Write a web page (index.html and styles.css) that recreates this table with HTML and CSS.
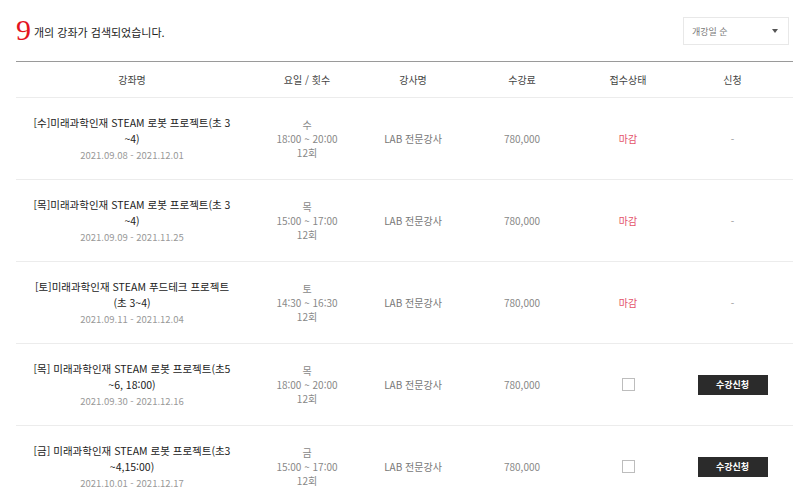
FILE: index.html
```html
<!DOCTYPE html>
<html lang="ko">
<head>
<meta charset="utf-8">
<link rel="stylesheet" href="styles.css">
</head>
<body>
<div class="wrap">
  <div class="top">
    <div class="count"><span class="num">9</span><span class="label">개의 강좌가 검색되었습니다.</span></div>
    <div class="select"><span>개강일 순</span><span class="arrow"></span></div>
  </div>
  <div class="table">
    <div class="row head">
      <div>강좌명</div><div>요일 / 횟수</div><div>강사명</div><div>수강료</div><div>접수상태</div><div>신청</div>
    </div>
    <div class="row">
      <div class="title"><p class="name">[수]미래과학인재 STEAM 로봇 프로젝트(초 3 ~4)</p><p class="date">2021.09.08 - 2021.12.01</p></div>
      <div class="sched">수<br>18:00 ~ 20:00<br>12회</div>
      <div class="teacher">LAB 전문강사</div>
      <div class="fee">780,000</div>
      <div class="closed">마감</div>
      <div class="dash">-</div>
    </div>
    <div class="row">
      <div class="title"><p class="name">[목]미래과학인재 STEAM 로봇 프로젝트(초 3 ~4)</p><p class="date">2021.09.09 - 2021.11.25</p></div>
      <div class="sched">목<br>15:00 ~ 17:00<br>12회</div>
      <div class="teacher">LAB 전문강사</div>
      <div class="fee">780,000</div>
      <div class="closed">마감</div>
      <div class="dash">-</div>
    </div>
    <div class="row">
      <div class="title"><p class="name">[토]미래과학인재 STEAM 푸드테크 프로젝트 (초 3~4)</p><p class="date">2021.09.11 - 2021.12.04</p></div>
      <div class="sched">토<br>14:30 ~ 16:30<br>12회</div>
      <div class="teacher">LAB 전문강사</div>
      <div class="fee">780,000</div>
      <div class="closed">마감</div>
      <div class="dash">-</div>
    </div>
    <div class="row">
      <div class="title"><p class="name">[목] 미래과학인재 STEAM 로봇 프로젝트(초5 ~6, 18:00)</p><p class="date">2021.09.30 - 2021.12.16</p></div>
      <div class="sched">목<br>18:00 ~ 20:00<br>12회</div>
      <div class="teacher">LAB 전문강사</div>
      <div class="fee">780,000</div>
      <div><span class="check"></span></div>
      <div><span class="btn">수강신청</span></div>
    </div>
    <div class="row">
      <div class="title"><p class="name">[금] 미래과학인재 STEAM 로봇 프로젝트(초3 ~4,15:00)</p><p class="date">2021.10.01 - 2021.12.17</p></div>
      <div class="sched">금<br>15:00 ~ 17:00<br>12회</div>
      <div class="teacher">LAB 전문강사</div>
      <div class="fee">780,000</div>
      <div><span class="check"></span></div>
      <div><span class="btn">수강신청</span></div>
    </div>
  </div>
</div>
</body>
</html>
```

FILE: styles.css
```css
* { box-sizing: border-box; }
html, body { margin: 0; padding: 0; background: #fff; }
body {
  font-family: "Noto Sans CJK KR", "Noto Sans", sans-serif;
  font-size: 10px;
  color: #555;
  overflow: hidden;
  height: 500px;
}
.wrap { padding: 0 7px 0 16px; }
.top {
  display: flex;
  justify-content: space-between;
  align-items: center;
  padding-top: 17px;
  margin-right: 4px;
}
.count { display: flex; align-items: center; height: 28px; }
.num {
  font-family: "Liberation Serif", "DejaVu Serif", serif;
  font-size: 30px;
  line-height: 28px;
  color: #e4151f;
  margin-right: 3px;
  position: relative;
  top: -1px;
}
.label { font-size: 11px; color: #222; position: relative; top: 1px; }
.select {
  width: 106px;
  height: 28px;
  border: 1px solid #e8e8e8;
  display: flex;
  align-items: center;
  justify-content: space-between;
  padding: 0 10px 0 8px;
  color: #777;
  font-size: 9px;
}
.arrow {
  width: 0; height: 0;
  border-left: 3.5px solid transparent;
  border-right: 3.5px solid transparent;
  border-top: 4px solid #555;
}
.table { margin-top: 16px; border-top: 1px solid #9a9a9a; }
.row {
  display: grid;
  grid-template-columns: 232px 118px 94px 124px 88px 121px;
  height: 82px;
  border-bottom: 1px solid #ececec;
  text-align: center;
}
.row > div { display: flex; flex-direction: column; align-items: center; justify-content: center; }
.row.head { height: 36px; color: #444; font-size: 10px; }
.title { padding: 0 14px; }
.title p { margin: 0; line-height: 16px; }
.name { color: #222; font-size: 10.5px; }
.date { color: #999; font-size: 9.5px; }
.sched { line-height: 14px; color: #888; font-size: 10px; }
.teacher { color: #777; }
.fee { color: #888; }
.closed { color: #e4536a; }
.dash { color: #999; }
.check {
  display: block;
  width: 13px; height: 13px;
  border: 1px solid #bdbdbd;
  background: #fff;
}
.btn {
  display: block;
  width: 70px; height: 20px;
  line-height: 20px;
  background: #2b2b2b;
  color: #fff;
  font-size: 9px;
  font-weight: bold;
}
```
